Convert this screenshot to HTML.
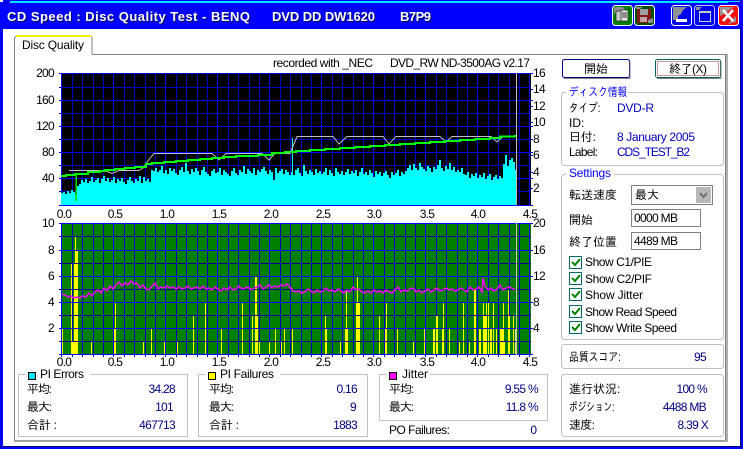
<!DOCTYPE html>
<html lang="ja"><head><meta charset="utf-8"><title>CD Speed</title>
<style>
html,body{margin:0;padding:0;background:#fff;width:743px;height:449px;overflow:hidden}
svg{display:block}
text{font-family:"Liberation Sans","IPAGothic","Noto Sans CJK JP",sans-serif;font-size:12px;fill:#000}
.n text,text.n{letter-spacing:-.7px}
.v{fill:#000080}.b{fill:#0000ff}
.e{text-anchor:end}.m{text-anchor:middle}
.t{font-family:"Liberation Sans",sans-serif;font-weight:bold;font-size:13px;fill:#fff}
.box{fill:none;stroke:#c0c0c0}
.c{fill:#fff;stroke:#006868}
.k{fill:none;stroke:#008000;stroke-width:2}
</style></head><body>
<svg width="743" height="449" viewBox="0 0 743 449" xmlns="http://www.w3.org/2000/svg">
<defs>
<pattern id="vmin" patternUnits="userSpaceOnUse" x="61" y="0" width="52" height="10"><rect x="11" width="1" height="10" fill="#0000c0"/><rect x="21" width="1" height="10" fill="#0000c0"/><rect x="32" width="1" height="10" fill="#0000c0"/><rect x="42" width="1" height="10" fill="#0000c0"/><rect x="0" width="1" height="10" fill="#0000ff"/></pattern>
<clipPath id="ct"><rect x="61" y="73" width="470" height="133"/></clipPath>
<clipPath id="cb"><rect x="61" y="223" width="470" height="132"/></clipPath>
</defs>
<rect width="743" height="449" fill="#0000ff"/>
<rect x="3" y="29" width="737" height="417" fill="#fff"/>
<rect x="0" y="446" width="743" height="1" fill="#000080"/>
<rect x="740" y="29" width="1" height="418" fill="#000080"/>
<rect x="10" y="1" width="718" height="2" fill="#00e8ff"/>
<rect x="728" y="1" width="12" height="1" fill="#00e8ff"/>
<rect x="0" y="0" width="3" height="2" fill="#fff"/>
<g style="filter:drop-shadow(1px 1px 0 #000060)">
<text class="t" x="7" y="21" textLength="243" lengthAdjust="spacing">CD Speed : Disc Quality Test - BENQ</text>
<text class="t" x="272" y="21" textLength="103" lengthAdjust="spacing">DVD DD DW1620</text>
<text class="t" x="400" y="21" textLength="31" lengthAdjust="spacing">B7P9</text>
</g>
<!-- title buttons -->
<g>
<rect x="612.5" y="5.5" width="20" height="20" rx="3" fill="#008000" stroke="#fff"/>
<path d="M614 7h8l4 3-3 3-4-2-5 3z" fill="#909090"/>
<rect x="616" y="11" width="6" height="10" fill="#c8c8c8" stroke="#303030" stroke-width=".8"/>
<rect x="621" y="10" width="7" height="11" fill="#e8e8e8" stroke="#303030" stroke-width=".8"/>
<path d="M622 13h5M622 15h5M622 17h5" stroke="#303030"/>
<rect x="634.5" y="5.5" width="20" height="20" rx="3" fill="#005000" stroke="#fff"/>
<rect x="637" y="9" width="14" height="14" fill="#801818"/>
<rect x="640" y="9" width="8" height="6" fill="#a0a0a0"/>
<rect x="640" y="17" width="7" height="5" fill="#c0a0a0"/>
<path d="M636 7h7l-3 2h-4zM648 20l5-2v5h-5z" fill="#909090"/>
<rect x="671.5" y="5.5" width="20" height="20" rx="3" fill="#0000f0" stroke="#fff"/>
<path d="M673 7h14l-4 3-2 4-3 2v4h-5z" fill="#909090"/>
<rect x="676" y="19" width="11" height="3" fill="#fff"/>
<rect x="694.5" y="5.5" width="20" height="20" rx="3" fill="#0000f0" stroke="#c0c0f0"/>
<path d="M696 7h6l-3 3h-3z" fill="#909090"/>
<rect x="699.5" y="11.5" width="11" height="10" fill="none" stroke="#c8c8c8"/>
<rect x="699" y="11" width="12" height="2" fill="#c8c8c8"/>
<rect x="718.5" y="5.5" width="20" height="20" rx="3" fill="#f01010" stroke="#fff"/>
<path d="M720 7h14l-6 4-4 3-4 2zM728 24l8-2v-6l-4 4z" fill="#a09090"/>
<path d="M723 10l10 11M733 10l-10 11" stroke="#fff" stroke-width="2.6"/>
</g>
<!-- tab & panel -->
<path d="M14.5 440.5V54.5H92.5H725.5V440.5z" fill="#fff" stroke="#808080"/>
<rect x="14" y="440" width="713" height="2" fill="#a0a0a0"/>
<rect x="726" y="54" width="2" height="388" fill="#b0b0b0"/>
<path d="M14.5 55V38l2-2h74l1.500 2V54" fill="#fff" stroke="#808080"/>
<rect x="15" y="54" width="77" height="2" fill="#fff"/>
<rect x="16" y="35" width="75" height="2" fill="#f0f000"/>
<text x="22" y="49" textLength="62" lengthAdjust="spacing">Disc Quality</text>
<text x="273" y="67" textLength="100" lengthAdjust="spacing">recorded with _NEC</text>
<text x="390" y="67" textLength="140" lengthAdjust="spacing">DVD_RW ND-3500AG v2.17</text>
<!-- top chart -->
<rect x="61" y="73" width="470" height="132" fill="#000"/>
<rect x="61" y="73" width="470" height="132" fill="url(#vmin)"/>
<path d="M59 87.500H531M59 113.500H531M59 139.500H531M59 165.500H531M59 191.500H531" stroke="#0000c0" shape-rendering="crispEdges"/>
<path d="M59 73.500H533M59 100.500H533M59 126.500H533M59 152.500H533M59 178.500H533M59 205.500H533" stroke="#0000ff" shape-rendering="crispEdges"/>
<path d="M531 89.500h2M531 106.500h2M531 122.500h2M531 139.500h2M531 155.500h2M531 172.500h2M531 188.500h2" stroke="#0000f0" shape-rendering="crispEdges"/>
<g clip-path="url(#ct)">
<path fill="#00ffff" shape-rendering="crispEdges" d="M61 205V193h2V192h2V194h2V191h2V193h2V190h2V192h2V194h2H77V186h2V184h2V180h2V182h2V179h2V183h2V181h2V177h2V182h2V180h2V178h2V183h2V179h2V176h2V181h2V178h2V182h2V180h2V177h2V183h2V179h2V181h2V178h2V182h2V184h2V180h2V177h2V181h2V183h2V179h2V181h2V176h2V183h2V177h2V181h2V179h2V182h2H151V170h2V171h2V168h2V172h2V170h2V166h2V173h2V170h2V174h2V168h2V171h2V169h2V173h2V175h2V170h2V167h2V172h2V163h2V171h2V174h2V169h2V172h2V168h2V171h2V175h2V170h2V167h2V172h2V174h2V176h2V171h2V169h2V173h2V172h2V168h2V175h2V170h2V172h2V174h2V176h2V171h2V168h2V173h2V175h2V170h2V172h2V166h2V174h2V169h2V171h2V173h2V168h2V175h2V170h2V172h2V169h2V167h2V171h2V174h2V170h2V172h2V180h2V168h2V173h2V171h2V169h2V174h2V170h2V172h2V175h2H291V172h2V175h2V170h2V168h2V173h2V176h2V165h2V171h2V174h2V170h2V172h2V175h2V169h2V173h2V171h2V174h2V172h2V168h2V175h2V170h2V173h2V176h2V168h2V172h2V174h2V171h2V175h2V172h2V169h2V174h2V171h2V173h2V170h2V176h2V172h2V168h2V174h2V172h2V175h2V170h2V173h2V177h2V171h2V174h2V172h2V176h2V173h2V171h2V175h2V178h2V172h2V175h2V173h2V170h2V176h2V172h2V174h2V171h2H407V168h2V165h2V170h2V164h2V168h2V170h2V163h2V167h2V169h2V171h2V166h2V168h2V172h2V167h2V169h2V165h2V160h2V168h2V171h2V166h2V169h2V163h2V170h2V167h2V172h2H457V170h2V172h2V168h2V174h2V175h2V172h2V178h2V174h2V176h2V173h2V178h2V175h2V177h2V173h2V179h2V176h2V174h2V180h2V177h2V175h2V179h2V176h2V178h2H503V164h2V155h2V166h2V160h2V158h2V162h2V170h2V172H516V205Z"/>
<rect x="292" y="138" width="1" height="67" fill="#00ffff"/>
<path fill="none" stroke="#c0c0c0" d="M69 170.500H105L112 173.500L119 170.500H139L143 168L150 158L154 153.500H212L219 160L226 153.500H262L269 160L275 153.500H290L297 136.500H333L339 144L347 136.500H383L389 144L396 136.500H440L446 142L452 136.500H491L497 142L503 136.500H515"/>
<path fill="none" stroke="#00ff00" stroke-width="2" shape-rendering="crispEdges" d="M61 176H66V175H75V174H88V172H100V171H105V170H115V169H125V168H135V167H146V164H152V163H164V162H176V161H188V160H200V159H212V158H224V157H236V156H258V155H272V153H285V152H296V151H310V150H325V149H340V148H355V147H370V146H385V145H400V144H415V143H430V142H445V141H460V140H475V139H490V138H500V136.500H515V135"/>
<rect x="75.500" y="174" width="1.500" height="27" fill="#00e000"/>
</g>
<rect x="516" y="73" width="1" height="132" fill="#c0c0c0"/>
<g class="e n">
<text x="54" y="77">200</text><text x="54" y="104">160</text><text x="54" y="130">120</text><text x="54" y="156">80</text><text x="54" y="182">40</text>
</g>
<g class="n">
<text x="533" y="77">16</text><text x="533" y="93">14</text><text x="533" y="110">12</text><text x="533" y="126">10</text><text x="533" y="143">8</text><text x="533" y="159">6</text><text x="533" y="176">4</text><text x="533" y="192">2</text>
</g>
<g class="m n">
<text x="64" y="218">0.0</text><text x="115" y="218">0.5</text><text x="167" y="218">1.0</text><text x="219" y="218">1.5</text><text x="271" y="218">2.0</text><text x="323" y="218">2.5</text><text x="374" y="218">3.0</text><text x="427" y="218">3.5</text><text x="478" y="218">4.0</text><text x="530" y="218">4.5</text>
</g>
<!-- bottom chart -->
<rect x="61" y="223" width="470" height="132" fill="#008000"/>
<rect x="61" y="223" width="470" height="134" fill="url(#vmin)"/>
<g clip-path="url(#cb)" fill="#ffff00" shape-rendering="crispEdges">
<rect x="62" y="328" width="1" height="27"/><rect x="71" y="263" width="1" height="92"/><rect x="71" y="341" width="3" height="14"/><rect x="75" y="237" width="1" height="118"/><rect x="75" y="250" width="3" height="105"/><rect x="74" y="263" width="2" height="92"/><rect x="77" y="289" width="1" height="66"/><rect x="91" y="341" width="1" height="14"/><rect x="115" y="302" width="1" height="53"/><rect x="114" y="328" width="2" height="27"/><rect x="143" y="341" width="1" height="14"/><rect x="151" y="328" width="1" height="27"/><rect x="164" y="341" width="1" height="14"/><rect x="177" y="341" width="1" height="14"/><rect x="193" y="315" width="1" height="40"/><rect x="205" y="302" width="1" height="53"/><rect x="221" y="328" width="1" height="27"/><rect x="242" y="302" width="1" height="53"/><rect x="252" y="315" width="1" height="40"/><rect x="255" y="276" width="2" height="79"/><rect x="257" y="315" width="1" height="40"/><rect x="259" y="341" width="1" height="14"/><rect x="269" y="341" width="1" height="14"/><rect x="275" y="328" width="1" height="27"/>
<rect x="281" y="341" width="1" height="14"/><rect x="284" y="328" width="1" height="27"/><rect x="292" y="328" width="1" height="27"/><rect x="325" y="315" width="1" height="40"/><rect x="325" y="328" width="2" height="27"/><rect x="340" y="341" width="1" height="14"/><rect x="346" y="289" width="1" height="66"/><rect x="345" y="328" width="3" height="27"/><rect x="357" y="276" width="1" height="79"/><rect x="356" y="302" width="4" height="53"/><rect x="379" y="315" width="1" height="40"/><rect x="386" y="302" width="1" height="53"/><rect x="385" y="328" width="2" height="27"/><rect x="397" y="328" width="1" height="27"/><rect x="413" y="341" width="1" height="14"/><rect x="424" y="328" width="1" height="27"/><rect x="433" y="328" width="2" height="27"/><rect x="436" y="315" width="2" height="40"/><rect x="442" y="328" width="2" height="27"/><rect x="443" y="302" width="1" height="53"/><rect x="449" y="328" width="1" height="27"/><rect x="459" y="341" width="1" height="14"/><rect x="463" y="302" width="1" height="53"/><rect x="469" y="341" width="1" height="14"/><rect x="474" y="289" width="2" height="66"/><rect x="479" y="328" width="2" height="27"/><rect x="483" y="302" width="1" height="53"/><rect x="484" y="315" width="2" height="40"/><rect x="486" y="302" width="1" height="53"/><rect x="488" y="302" width="1" height="53"/><rect x="490" y="328" width="2" height="27"/><rect x="493" y="302" width="1" height="53"/><rect x="496" y="328" width="1" height="27"/><rect x="500" y="328" width="4" height="27"/><rect x="503" y="302" width="1" height="53"/><rect x="504" y="341" width="1" height="14"/><rect x="508" y="289" width="1" height="66"/><rect x="509" y="315" width="1" height="40"/><rect x="513" y="315" width="1" height="40"/><rect x="515" y="328" width="1" height="27" fill="#e8e880"/>
</g>
<path d="M59 236.500H531M59 263.500H531M59 289.500H531M59 315.500H531M59 341.500H531" stroke="#000090" shape-rendering="crispEdges"/>
<path d="M59 223.500H533M59 250.500H533M59 276.500H533M59 302.500H533M59 328.500H533M59 354.500H533" stroke="#0000ff" shape-rendering="crispEdges"/>
<path fill="none" stroke="#ff00ff" stroke-width="1.500" d="M62 294L65 295 68 297 71 296 74 298 77 297 80 298 83 296 86 297 89 293 92 296 95 292 98 290 101 293 104 288 107 291 110 286 113 289 116 285 119 282 122 286 125 283 128 285 131 281 134 284 137 283 140 288 143 285 146 289 149 290 152 286 155 283 158 289 161 287 164 288 167 286 170 288 173 287 176 289 179 287 182 289 185 288 188 286 191 289 194 288 197 287 200 289 203 286 206 289 209 288 212 290 215 287 218 289 221 291 224 288 227 290 230 287 233 290 236 289 239 286 242 289 245 288 248 287 251 290 254 288 257 287 260 285 263 289 266 287 269 285 272 288 275 286 278 287 281 285 284 286 287 284 290 287 293 291 296 292 299 291 302 293 305 292 308 289 311 291 314 293 317 290 320 292 323 291 326 288 329 291 332 290 335 292 338 289 341 291 344 293 347 290 350 292 353 287 356 290 359 289 362 292 365 293 368 291 371 293 374 290 377 292 380 291 383 293 386 290 389 292 392 293 395 290 398 287 401 292 404 290 407 291 410 289 413 288 416 292 419 290 422 293 425 291 428 289 431 292 434 290 437 288 440 291 443 290 446 288 449 290 452 289 455 291 458 290 461 288 464 290 467 292 470 287 473 290 476 289 479 287 482 292 483 278 485 286 488 290 491 288 494 291 497 289 500 285 503 290 506 288 509 287 512 288 515 290"/>
<rect x="516" y="223" width="1" height="132" fill="#c8c8a8"/>
<g class="e n">
<text x="54" y="227">10</text><text x="54" y="254">8</text><text x="54" y="280">6</text><text x="54" y="306">4</text><text x="54" y="332">2</text>
</g>
<g class="n">
<text x="533" y="227">20</text><text x="533" y="254">16</text><text x="533" y="280">12</text><text x="533" y="306">8</text><text x="533" y="332">4</text>
</g>
<g class="m n">
<text x="64" y="366">0.0</text><text x="115" y="366">0.5</text><text x="167" y="366">1.0</text><text x="219" y="366">1.5</text><text x="271" y="366">2.0</text><text x="323" y="366">2.5</text><text x="374" y="366">3.0</text><text x="427" y="366">3.5</text><text x="478" y="366">4.0</text><text x="530" y="366">4.5</text>
</g>
<!-- stats -->
<rect class="box" x="18.500" y="374.500" width="169" height="62"/>
<rect x="25" y="370" width="65" height="9" fill="#fff"/>
<rect x="28.500" y="372.500" width="7" height="7" fill="#00e8f8" stroke="#000"/>
<text x="40" y="378" textLength="44" lengthAdjust="spacing">PI Errors</text>
<text x="27" y="393" textLength="25" lengthAdjust="spacing">平均:</text>
<text x="27" y="411" textLength="25" lengthAdjust="spacing">最大:</text>
<text x="27" y="429" textLength="30" lengthAdjust="spacing">合計 :</text>
<g class="n">
<text class="v e" x="175" y="393">34.28</text><text class="v e" x="173" y="411">101</text><text class="v e" x="175" y="429">467713</text>
</g>
<rect class="box" x="198.500" y="374.500" width="169" height="62"/>
<rect x="205" y="370" width="75" height="9" fill="#fff"/>
<rect x="208.500" y="372.500" width="7" height="7" fill="#ffff00" stroke="#000"/>
<text x="220" y="378" textLength="54" lengthAdjust="spacing">PI Failures</text>
<text x="209" y="393" textLength="25" lengthAdjust="spacing">平均:</text>
<text x="209" y="411" textLength="25" lengthAdjust="spacing">最大:</text>
<text x="209" y="429" textLength="30" lengthAdjust="spacing">合計 :</text>
<g class="n">
<text class="v e" x="357" y="393">0.16</text><text class="v e" x="356" y="411">9</text><text class="v e" x="357" y="429">1883</text>
</g>
<rect class="box" x="379.500" y="374.500" width="168" height="46"/>
<rect x="386" y="370" width="44" height="9" fill="#fff"/>
<rect x="389.500" y="372.500" width="7" height="7" fill="#ff00ff" stroke="#000"/>
<text x="402" y="378" textLength="26" lengthAdjust="spacing">Jitter</text>
<text x="389" y="393" textLength="25" lengthAdjust="spacing">平均:</text>
<text x="389" y="411" textLength="25" lengthAdjust="spacing">最大:</text>
<g class="n">
<text class="v e" x="538" y="393">9.55 %</text><text class="v e" x="538" y="411">11.8 %</text>
</g>
<text x="389" y="434" textLength="61" lengthAdjust="spacing">PO Failures:</text><text class="v e" x="537" y="434">0</text>
<!-- buttons -->
<rect x="562.500" y="59.500" width="67" height="18" rx="2" fill="#fff" stroke="#000080"/>
<path d="M630 62V78.500H564" fill="none" stroke="#808080"/>
<text class="m" x="596" y="73">開始</text>
<rect x="655.500" y="59.500" width="65" height="18" rx="2" fill="#fff" stroke="#006060"/>
<rect x="657.500" y="61.500" width="61" height="14" fill="none" stroke="#a03030" stroke-dasharray="1 1"/>
<path d="M721 62V78.500H657" fill="none" stroke="#808080"/>
<text class="m" x="688" y="73" textLength="38" lengthAdjust="spacing">終了(X)</text>
<!-- disc info -->
<rect class="box" x="561.500" y="92.500" width="162" height="73" rx="3"/>
<rect x="566" y="88" width="62" height="9" fill="#fff"/>
<text class="b" transform="translate(569 96) scale(.81 1)" x="0" y="0">ディスク情報</text>
<text transform="translate(569 112) scale(.8 1)" x="0" y="0">タイプ:</text>
<text x="617" y="112" style="fill:#0000c0" textLength="37" lengthAdjust="spacing">DVD-R</text>
<text x="569" y="127">ID:</text>
<text x="569" y="141" textLength="27" lengthAdjust="spacing">日付:</text>
<text x="617" y="141" style="fill:#0000c0" textLength="78" lengthAdjust="spacing">8 January 2005</text>
<text x="569" y="156" textLength="29" lengthAdjust="spacing">Label:</text>
<text x="617" y="156" style="fill:#0000c0" textLength="73" lengthAdjust="spacing">CDS_TEST_B2</text>
<!-- settings -->
<rect class="box" x="561.500" y="174.500" width="162" height="165" rx="3"/>
<rect x="566" y="170" width="48" height="9" fill="#fff"/>
<text class="b" x="569" y="177" textLength="42" lengthAdjust="spacing">Settings</text>
<text x="569" y="199">転送速度</text>
<rect x="631.500" y="185.500" width="81" height="19" fill="#fff" stroke="#808080"/>
<text x="635" y="199">最大</text>
<rect x="696" y="187" width="15" height="16" rx="1" fill="#b8b8b8"/>
<path d="M700 193l3.500 4 3.500-4" fill="none" stroke="#707070" stroke-width="2"/>
<text x="569" y="224">開始</text>
<rect x="631.500" y="209.500" width="69" height="17" fill="#fff" stroke="#808080"/>
<text x="634" y="222" textLength="44" lengthAdjust="spacing">0000 MB</text>
<text x="569" y="246">終了位置</text>
<rect x="631.500" y="232.500" width="69" height="17" fill="#fff" stroke="#808080"/>
<text x="634" y="245" textLength="44" lengthAdjust="spacing">4489 MB</text>
<rect class="c" x="569.500" y="256.500" width="12" height="12"/><path class="k" d="M572 262l3 3 5-6"/><text x="585" y="266" textLength="67" lengthAdjust="spacing">Show C1/PIE</text>
<rect class="c" x="569.500" y="272.500" width="12" height="12"/><path class="k" d="M572 278l3 3 5-6"/><text x="585" y="283" textLength="67" lengthAdjust="spacing">Show C2/PIF</text>
<rect class="c" x="569.500" y="288.500" width="12" height="12"/><path class="k" d="M572 294l3 3 5-6"/><text x="585" y="299" textLength="58" lengthAdjust="spacing">Show Jitter</text>
<rect class="c" x="569.500" y="305.500" width="12" height="12"/><path class="k" d="M572 311l3 3 5-6"/><text x="585" y="316" textLength="92" lengthAdjust="spacing">Show Read Speed</text>
<rect class="c" x="569.500" y="321.500" width="12" height="12"/><path class="k" d="M572 327l3 3 5-6"/><text x="585" y="332" textLength="92" lengthAdjust="spacing">Show Write Speed</text>
<!-- score -->
<rect class="box" x="561.500" y="344.500" width="162" height="24" rx="3"/>
<text transform="translate(569 361) scale(.82 1)" x="0" y="0">品質スコア:</text>
<text class="v e" x="706" y="361" letter-spacing="-.7">95</text>
<!-- progress -->
<rect class="box" x="561.500" y="374.500" width="162" height="62" rx="3"/>
<text x="569" y="393">進行状況:</text>
<text class="v e n" x="707" y="393">100 %</text>
<text transform="translate(569 411) scale(.72 1)" x="0" y="0">ポジション:</text>
<text class="v e n" x="706" y="411">4488 MB</text>
<text x="569" y="429" textLength="26" lengthAdjust="spacing">速度:</text>
<text class="v e n" x="708" y="429">8.39 X</text>
</svg>
</body></html>
